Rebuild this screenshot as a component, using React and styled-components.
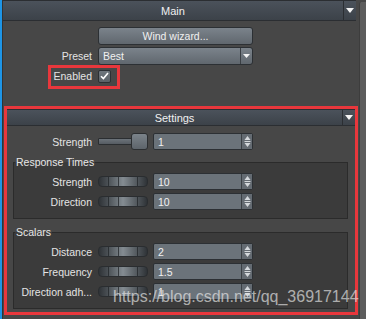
import React from 'react';
import styled, { createGlobalStyle } from 'styled-components';

const GlobalStyle = createGlobalStyle`
  * { box-sizing: border-box; }
  html, body { margin: 0; padding: 0; background: #474747; }
  body {
    font-family: "Liberation Sans", Arial, sans-serif;
    font-size: 10.5px;
    color: #e4e4e4;
  }
`;

const Window = styled.div`
  position: relative;
  display: flex;
  width: 366px;
  height: 319px;
  overflow: hidden;
  background: #474747;
`;

const FocusStripe = styled.div`
  width: 2px;
  flex-shrink: 0;
  background: #1e95e6;
`;

const Panel = styled.div`
  flex: 1;
  min-width: 0;
  display: flex;
  flex-direction: column;
  border-left: 1px solid #333;
`;

const Scrollbar = styled.div`
  width: 7px;
  flex-shrink: 0;
  margin-top: 2px;
  background: #5d5d5d;
  border-left: 1px solid #3d3d3d;
  border-top-left-radius: 2px;
`;

const Section = styled.div`
  margin-right: 3px;
`;

const SettingsSection = styled.div`
  margin: 21px 1px 0 1px;
  border: 3px solid #e8373c;
`;

const Header = styled.div`
  display: flex;
  height: ${p => p.$h}px;
  background: linear-gradient(180deg, #4b525b 0%, #3c4249 100%);
  border-top: 1px solid #2b2e32;
  border-bottom: 1px solid #2b2e32;
`;

const HeaderTitle = styled.div`
  flex: 1;
  display: flex;
  align-items: center;
  justify-content: center;
  color: #f0f0f0;
  font-size: 11px;
`;

const HeaderToggle = styled.div`
  width: 13px;
  display: flex;
  align-items: center;
  justify-content: center;
  border-left: 1px solid #2b2e32;
`;

const Form = styled.div`
  display: flex;
  flex-direction: column;
  gap: ${p => p.$gap}px;
  padding: ${p => p.$pad};
`;

const Row = styled.div`
  position: relative;
  display: grid;
  grid-template-columns: ${p => p.$label}px auto;
  column-gap: 6px;
  align-items: center;
  height: ${p => p.$h}px;
`;

const Label = styled.div`
  text-align: right;
  white-space: nowrap;
`;

const Controls = styled.div`
  display: flex;
  align-items: center;
  gap: 5px;
`;

const Button = styled.div`
  width: 155px;
  height: 18px;
  display: flex;
  align-items: center;
  justify-content: center;
  border: 1px solid #2c3034;
  border-radius: 3px;
  background: linear-gradient(180deg, #7b838b 0%, #60676e 100%);
  color: #f0f0f0;
`;

const Dropdown = styled.div`
  width: 155px;
  height: 18px;
  display: flex;
  border: 1px solid #2c3034;
  border-radius: 3px;
  background: linear-gradient(180deg, #7b838b 0%, #60676e 100%);
  color: #f0f0f0;
`;

const DropdownValue = styled.div`
  flex: 1;
  display: flex;
  align-items: center;
  padding-left: 4px;
`;

const DropdownArrow = styled.div`
  width: 12px;
  display: flex;
  align-items: center;
  justify-content: center;
  border-left: 1px solid #3a3f44;
`;

const Checkbox = styled.div`
  width: 13px;
  height: 13px;
  display: flex;
  align-items: center;
  justify-content: center;
  border: 1px solid #2c3034;
  border-radius: 2px;
  background: linear-gradient(180deg, #6f777e 0%, #5a6167 100%);
`;

const Annotation = styled.div`
  position: absolute;
  left: ${p => p.$left}px;
  top: ${p => p.$top}px;
  width: ${p => p.$w}px;
  height: ${p => p.$h}px;
  border: 3px solid #e8373c;
  pointer-events: none;
`;

const Slider = styled.div`
  display: flex;
  align-items: center;
  width: 50px;
  height: 17px;
`;

const SliderTrack = styled.div`
  width: 35px;
  height: 7px;
  border: 1px solid #2b2e31;
  border-radius: 1px;
  background: linear-gradient(180deg, #6c737a 0%, #565c62 100%);
`;

const SliderHandle = styled.div`
  width: 17px;
  height: 17px;
  margin-left: -2px;
  border: 1px solid #2b2e31;
  border-radius: 3px;
  background: linear-gradient(180deg, #7b838a 0%, #5d646b 100%);
`;

const Dial = styled.div`
  display: flex;
  width: 50px;
  height: 11px;
  border: 1px solid #2a2d30;
  border-radius: 4px;
  overflow: hidden;
  background: linear-gradient(90deg, #2f3337 0%, #50565b 22%, #848c92 50%, #50565b 80%, #2f3337 100%);
`;

const DialRib = styled.span`
  flex: ${p => p.$w};
  border-right: 1px solid rgba(34, 37, 40, 0.75);
  &:last-child { border-right: 0; }
`;

const SpinBox = styled.div`
  width: 100px;
  height: 17px;
  display: flex;
  border: 1px solid #2c3034;
  border-radius: 2px;
  background: #6b737a;
  color: #f2f2f2;
`;

const SpinValue = styled.div`
  flex: 1;
  display: flex;
  align-items: center;
  padding-left: 4px;
`;

const SpinArrows = styled.div`
  width: 11px;
  display: flex;
  align-items: center;
  justify-content: center;
  border-left: 1px solid #3b4045;
  background: #646b72;
`;

const Group = styled.fieldset`
  margin: ${p => p.$top}px 7px 0 6px;
  padding: 5px 0 8px 0;
  min-width: 0;
  border: 1px solid #2b2b2b;
  background: #3b3b3b;
`;

const GroupTitle = styled.legend`
  margin-left: 1px;
  padding: 0 1px;
  line-height: 12px;
  color: #e8e8e8;
`;

const Watermark = styled.div`
  position: absolute;
  left: 113px;
  top: 288px;
  font-family: "Liberation Sans", Arial, sans-serif;
  font-size: 16px;
  line-height: 18px;
  color: rgba(232, 232, 232, 0.68);
  white-space: nowrap;
  pointer-events: none;
`;

const DownTriangle = ({ w = 8, h = 5 }) => (
  <svg width={w} height={h} viewBox={`0 0 ${w} ${h}`}>
    <polygon points={`0,0 ${w},0 ${w / 2},${h}`} fill="#f4f4f4" />
  </svg>
);

const SpinGlyph = () => (
  <svg width="7" height="13" viewBox="0 0 7 13">
    <polygon points="0.5,5 6.5,5 3.5,1" fill="#d4d8dc" />
    <line x1="0.5" y1="6.5" x2="6.5" y2="6.5" stroke="#d4d8dc" strokeWidth="1" />
    <polygon points="0.5,8 6.5,8 3.5,12" fill="#d4d8dc" />
  </svg>
);

const CheckMark = () => (
  <svg width="9" height="8" viewBox="0 0 9 8">
    <path d="M1 4.2 L3.4 6.6 L8 1" fill="none" stroke="#ffffff" strokeWidth="1.6" />
  </svg>
);

const Spin = ({ value }) => (
  <SpinBox>
    <SpinValue>{value}</SpinValue>
    <SpinArrows><SpinGlyph /></SpinArrows>
  </SpinBox>
);

const DialRow = ({ label, value, labelWidth }) => (
  <Row $label={labelWidth} $h={17}>
    <Label>{label}</Label>
    <Controls>
      <Dial>
        <DialRib $w={10} />
        <DialRib $w={9} />
        <DialRib $w={19} />
        <DialRib $w={10} />
      </Dial>
      <Spin value={value} />
    </Controls>
  </Row>
);

const responseTimes = [
  { label: 'Strength', value: '10' },
  { label: 'Direction', value: '10' },
];

const scalars = [
  { label: 'Distance', value: '2' },
  { label: 'Frequency', value: '1.5' },
  { label: 'Direction adh...', value: '1' },
];

const App = () => (
  <>
    <GlobalStyle />
    <Window>
      <FocusStripe />
      <Panel>
        <Section>
          <Header $h={21}>
            <HeaderTitle>Main</HeaderTitle>
            <HeaderToggle><DownTriangle /></HeaderToggle>
          </Header>
          <Form $gap={2} $pad="6px 0 0 0">
            <Row $label={89} $h={18}>
              <span />
              <Button>Wind wizard...</Button>
            </Row>
            <Row $label={89} $h={18}>
              <Label>Preset</Label>
              <Dropdown>
                <DropdownValue>Best</DropdownValue>
                <DropdownArrow><DownTriangle w={7} h={4} /></DropdownArrow>
              </Dropdown>
            </Row>
            <Row $label={89} $h={18}>
              <Label>Enabled</Label>
              <Checkbox><CheckMark /></Checkbox>
              <Annotation $left={45} $top={-2} $w={72} $h={24} />
            </Row>
          </Form>
        </Section>

        <SettingsSection>
          <Header $h={17}>
            <HeaderTitle>Settings</HeaderTitle>
            <HeaderToggle><DownTriangle /></HeaderToggle>
          </Header>
          <Form $gap={0} $pad="7px 0 3px 0">
            <Row $label={85} $h={17}>
              <Label>Strength</Label>
              <Controls>
                <Slider>
                  <SliderTrack />
                  <SliderHandle />
                </Slider>
                <Spin value="1" />
              </Controls>
            </Row>

            <Group $top={6}>
              <GroupTitle>Response Times</GroupTitle>
              <Form $gap={3} $pad="0">
                {responseTimes.map(r => (
                  <DialRow key={r.label} label={r.label} value={r.value} labelWidth={78} />
                ))}
              </Form>
            </Group>

            <Group $top={7}>
              <GroupTitle>Scalars</GroupTitle>
              <Form $gap={3} $pad="0">
                {scalars.map(r => (
                  <DialRow key={r.label} label={r.label} value={r.value} labelWidth={78} />
                ))}
              </Form>
            </Group>
          </Form>
        </SettingsSection>
      </Panel>
      <Scrollbar />
      <Watermark>https://blog.csdn.net/qq_36917144</Watermark>
    </Window>
  </>
);

export default App;
